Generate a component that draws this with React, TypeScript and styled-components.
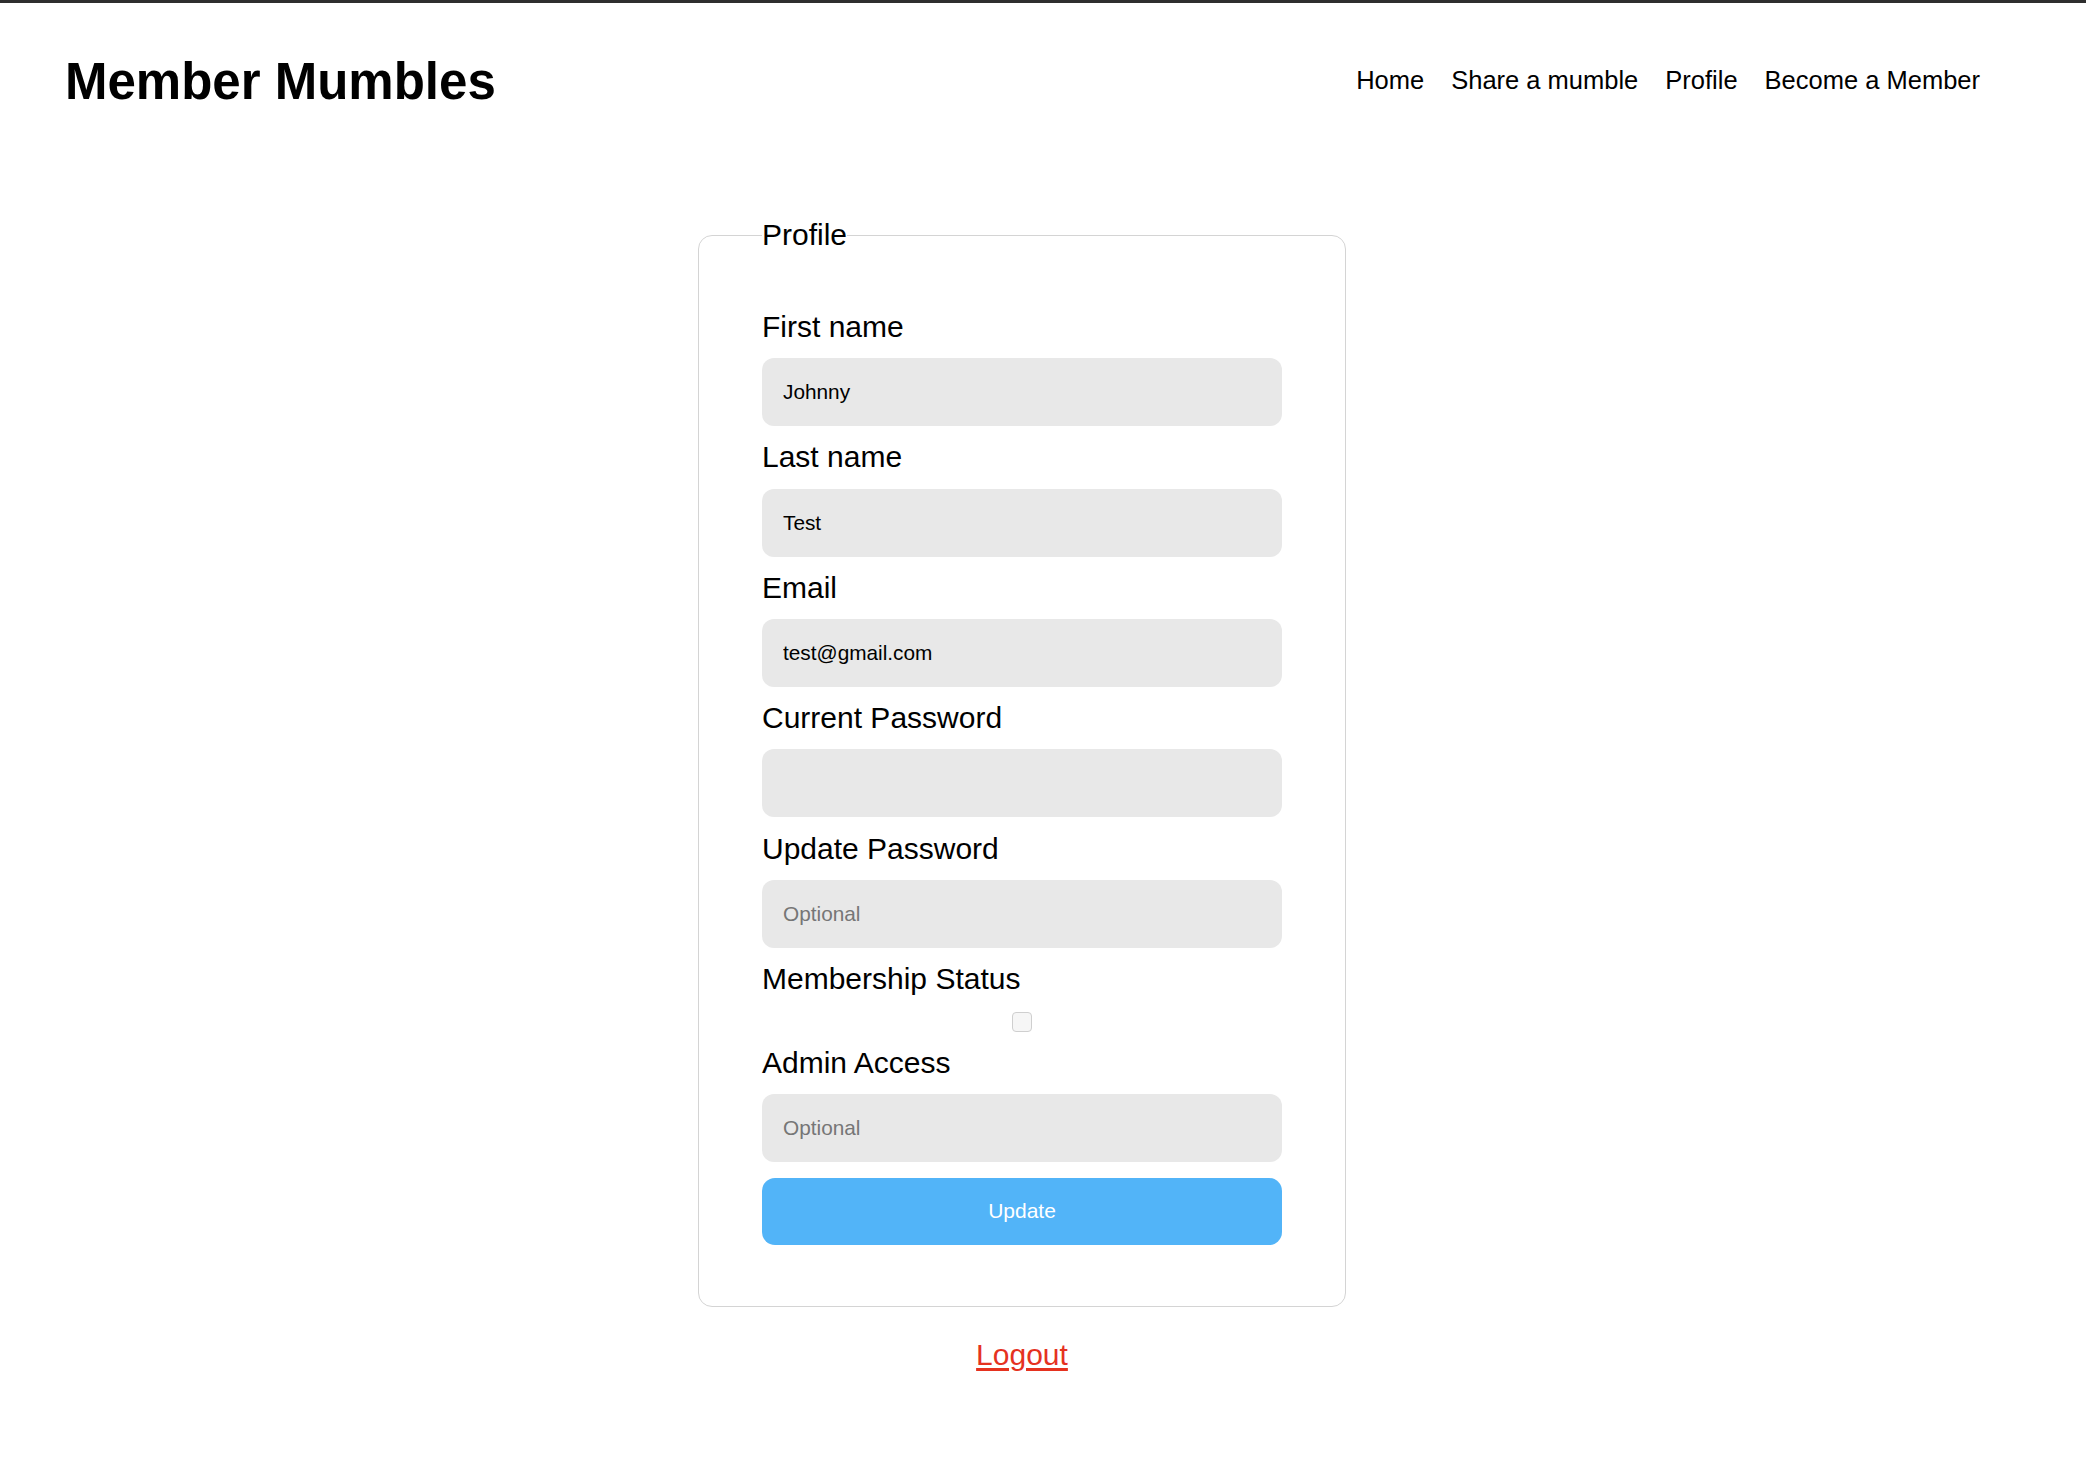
import React from "react";
import styled, { createGlobalStyle } from "styled-components";

const GlobalStyle = createGlobalStyle`
  html, body {
    margin: 0;
    padding: 0;
    background: #ffffff;
  }
  body {
    font-family: "Liberation Sans", Arial, Helvetica, sans-serif;
    color: #000000;
    border-top: 3px solid #2e2e2e;
  }
  * {
    box-sizing: border-box;
  }
`;

const Page = styled.div`
  width: 2044px;
  min-height: 1477px;
  display: flex;
  flex-direction: column;
`;

const Header = styled.header`
  display: flex;
  align-items: center;
  justify-content: space-between;
  padding: 49px 64px 0 65px;
`;

const Title = styled.h1`
  margin: 0;
  font-size: 51px;
  font-weight: 700;
  line-height: normal;
  letter-spacing: 0;
`;

const Nav = styled.nav`
  display: flex;
  align-items: center;
  gap: 27px;
  margin-top: -2px;
`;

const NavLink = styled.a`
  font-size: 25.5px;
  color: #000000;
  text-decoration: none;
  line-height: normal;
`;

const Main = styled.main`
  display: flex;
  flex-direction: column;
  align-items: center;
  padding-top: 107px;
`;

const Fieldset = styled.fieldset`
  width: 648px;
  margin: 0;
  min-width: 0;
  border: 1px solid #d4d4d4;
  border-radius: 14px;
  padding: 58px 63px 61px 63px;
`;

const Legend = styled.legend`
  padding: 0;
  margin: 0;
  font-size: 30px;
  line-height: normal;
`;

const Form = styled.form`
  display: flex;
  flex-direction: column;
  gap: 14.2px;
`;

const Label = styled.label`
  font-size: 30px;
  line-height: normal;
  display: block;
`;

const Input = styled.input`
  width: 100%;
  height: 68px;
  border: none;
  outline: none;
  border-radius: 12px;
  background: #e8e8e8;
  padding: 0 21px;
  font-family: "Liberation Sans", Arial, Helvetica, sans-serif;
  font-size: 20.8px;
  color: #000000;

  &::placeholder {
    color: #767676;
  }
`;

const Checkbox = styled.input`
  appearance: none;
  -webkit-appearance: none;
  align-self: center;
  width: 20px;
  height: 20px;
  margin: 2px 0 0 0;
  border: 1.5px solid #cfcfcf;
  border-radius: 4px;
  background: #f6f6f6;
`;

const SubmitButton = styled.button`
  margin-top: 1px;
  width: 100%;
  height: 67px;
  border: none;
  border-radius: 13px;
  background: #52b4f8;
  color: #ffffff;
  font-family: "Liberation Sans", Arial, Helvetica, sans-serif;
  font-size: 21px;
  cursor: pointer;
`;

const LogoutLink = styled.a`
  margin-top: 31px;
  font-size: 30px;
  line-height: normal;
  color: #e5321f;
  text-decoration: underline;
  text-underline-offset: 3px;
`;

type Field = {
  id: string;
  label: string;
  value?: string;
  placeholder?: string;
  type?: string;
};

const fields: Field[] = [
  { id: "first", label: "First name", value: "Johnny" },
  { id: "last", label: "Last name", value: "Test" },
  { id: "email", label: "Email", value: "test@gmail.com" },
  { id: "current", label: "Current Password", type: "password" },
  { id: "update", label: "Update Password", placeholder: "Optional", type: "password" },
];

export default function App() {
  return (
    <>
      <GlobalStyle />
      <Page>
        <Header>
          <Title>Member Mumbles</Title>
          <Nav>
            <NavLink href="#">Home</NavLink>
            <NavLink href="#">Share a mumble</NavLink>
            <NavLink href="#">Profile</NavLink>
            <NavLink href="#">Become a Member</NavLink>
          </Nav>
        </Header>
        <Main>
          <Fieldset>
            <Legend>Profile</Legend>
            <Form onSubmit={(e) => e.preventDefault()}>
              {fields.map((f) => (
                <React.Fragment key={f.id}>
                  <Label htmlFor={f.id}>{f.label}</Label>
                  <Input
                    id={f.id}
                    type={f.type ?? "text"}
                    defaultValue={f.value}
                    placeholder={f.placeholder}
                  />
                </React.Fragment>
              ))}
              <Label htmlFor="membership">Membership Status</Label>
              <Checkbox id="membership" type="checkbox" />
              <Label htmlFor="admin">Admin Access</Label>
              <Input id="admin" type="text" placeholder="Optional" />
              <SubmitButton type="submit">Update</SubmitButton>
            </Form>
          </Fieldset>
          <LogoutLink href="#">Logout</LogoutLink>
        </Main>
      </Page>
    </>
  );
}
